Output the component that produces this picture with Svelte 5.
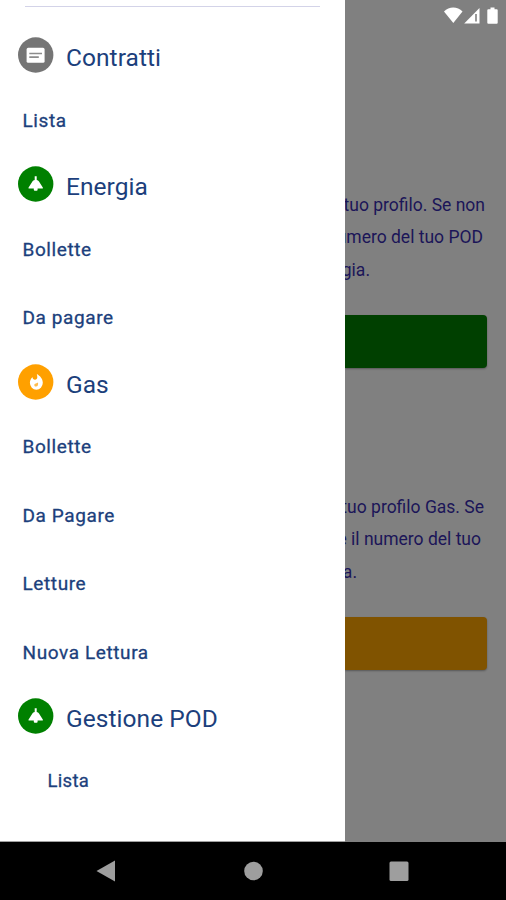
<script>
  const sections = [
    { title: 'Contratti', icon: 'card', items: ['Lista'] },
    { title: 'Energia', icon: 'lamp', items: ['Bollette', 'Da pagare'] },
    { title: 'Gas', icon: 'fire', items: ['Bollette', 'Da Pagare', 'Letture', 'Nuova Lettura'] },
    { title: 'Gestione POD', icon: 'lamp', items: ['Lista'], nested: true }
  ];
  const colors = { card: '#757575', lamp: '#008000', fire: '#ffa000' };
</script>

<div class="screen">
  <div class="view">
    <nav class="drawer">
      <div class="divider"></div>
      {#each sections as s}
        <div class="heading">
          <svg class="badge" viewBox="0 0 36 36">
            <circle cx="17.7" cy="18" r="17.7" fill={colors[s.icon]} />
            {#if s.icon === 'card'}
              <rect x="8.6" y="10.8" width="18" height="15" rx="1.6" fill="#fff" />
              <path d="M11.300 16.500h12.700M11.300 20.100h9.500" stroke="#8c8c8c" stroke-width="1.600" />
            {:else if s.icon === 'lamp'}
              <path d="M16.700 10.200h2v3.700c1 .1 1.800.7 2.300 1.600l3.800 6.100c.3.600.1 1-.6 1h-4.600v1.200q0 1-1 1h-1.800q-1 0-1-1v-1.200h-4.600c-.7 0-.9-.4-.6-1l3.800-6.100c.5-.9 1.300-1.500 2.300-1.600z" fill="#fff" />
            {:else}
              <path d="M18.800 9.900s.5 1.800.5 3.300c0 1.400-.9 2.500-2.300 2.500s-2.500-1.100-2.500-2.500l.1-.3c-1.800 1.800-2.700 3.700-2.700 5.900a6.300 6.700 0 0 0 12.900 0c0-4-2.600-7-6-8.900z" fill="#fff" />
              <path d="M18 22.600c-1 0-1.700-.7-1.700-1.600 0-.8.600-1.400 1.500-1.600.9-.2 1.600-.500 2.200-1 .4 2.200-.2 4.200-2 4.200z" fill="#ffa000" opacity=".7" />
            {/if}
          </svg>
          <span>{s.title}</span>
        </div>
        {#each s.items as item}
          <div class="item" class:nested={s.nested}>{item}</div>
        {/each}
      {/each}
    </nav>

    <main class="page">
      <div class="status">
        <svg width="54" height="18" viewBox="0 0 54 18" fill="#fff">
          <path d="M0 4.500C5-.8 13.500-.8 18.500 4.500L9.300 16z" />
          <path d="M20.200 16.500L35.500 1v15.500z" />
          <path d="M32 7v7.500" stroke="#808080" stroke-width="1.600" />
          <path d="M46.500.5h4v1.800h2.200q1 0 1 1v12.400q0 1-1 1h-8.400q-1 0-1-1V3.300q0-1 1-1h2.200z" />
        </svg>
      </div>
      <section class="energy">
        <p><span>tuo profilo. Se non</span><span class="r2">umero del tuo POD</span><span class="r3">gia.</span></p>
        <div class="button green"></div>
      </section>
      <section class="gas">
        <p><span>tuo profilo Gas. Se</span><span class="r2">e il numero del tuo</span><span class="r3">a.</span></p>
        <div class="button orange"></div>
      </section>
    </main>
  </div>

  <footer>
    <svg viewBox="0 0 506 58" width="506" height="58" fill="#9e9e9e">
      <path d="M96.500 29L115 18.500v21z" />
      <circle cx="253.500" cy="29" r="9.300" />
      <rect x="389.500" y="19.500" width="19" height="19.500" rx="1.500" />
    </svg>
  </footer>
</div>

<style>
  .screen { width: 506px; height: 900px; overflow: hidden; display: flex; flex-direction: column; background: #000; font-family: Roboto, sans-serif; }
  .view { height: 842px; display: flex; background: #808080; }
  .drawer { width: 345px; flex: none; background: #fff; color: #1c3f7c; box-sizing: border-box; box-shadow: inset 0 -1px #a0a0a0; padding-top: 6px; }
  .divider { height: 1px; margin: 0 25px 20px; background: #d3d3e8; }
  .heading { height: 60.500px; display: flex; align-items: center; padding-left: 18px; gap: 12px; font-size: 24.500px; letter-spacing: .05px; }
  .heading span { position: relative; top: .5px; }
  .badge { width: 36px; height: 36px; flex: none; position: relative; top: -2px; }
  .item { height: 68.500px; line-height: 66.500px; padding-left: 22.500px; font-size: 19px; letter-spacing: .6px; -webkit-text-stroke: .3px #1c3f7c; }
  .item.nested { padding-left: 47.500px; font-size: 18.500px; letter-spacing: .3px; line-height: 65px; }
  .page { width: 161px; min-width: 0; display: flex; flex-direction: column; color: #1b1558; }
  .status { display: flex; justify-content: flex-end; height: 18px; padding: 7px 8px 163.500px 0; }
  section { height: 302px; flex: none; }
  p { margin: 0; display: flex; flex-direction: column; align-items: flex-end; padding-right: 21px; font-size: 17.500px; line-height: 32.300px; white-space: nowrap; position: relative; top: .5px; }
  .r2 { margin-right: 2px; }
  .r3 { margin-right: 115px; }
  .gas p { padding-right: 22px; }
  .gas .r2 { margin-right: 3px; }
  .gas .r3 { margin-right: 127px; }
  .drawer { position: relative; z-index: 1; }
  .button { height: 53px; margin: 29.500px 19px 0 0; border-radius: 0 4px 4px 0; box-shadow: 0 1px 2px #00000050; }
  .green { background: #004000; }
  .orange { background: #805300; }
  footer { height: 58px; }
  svg { display: block; }
</style>
